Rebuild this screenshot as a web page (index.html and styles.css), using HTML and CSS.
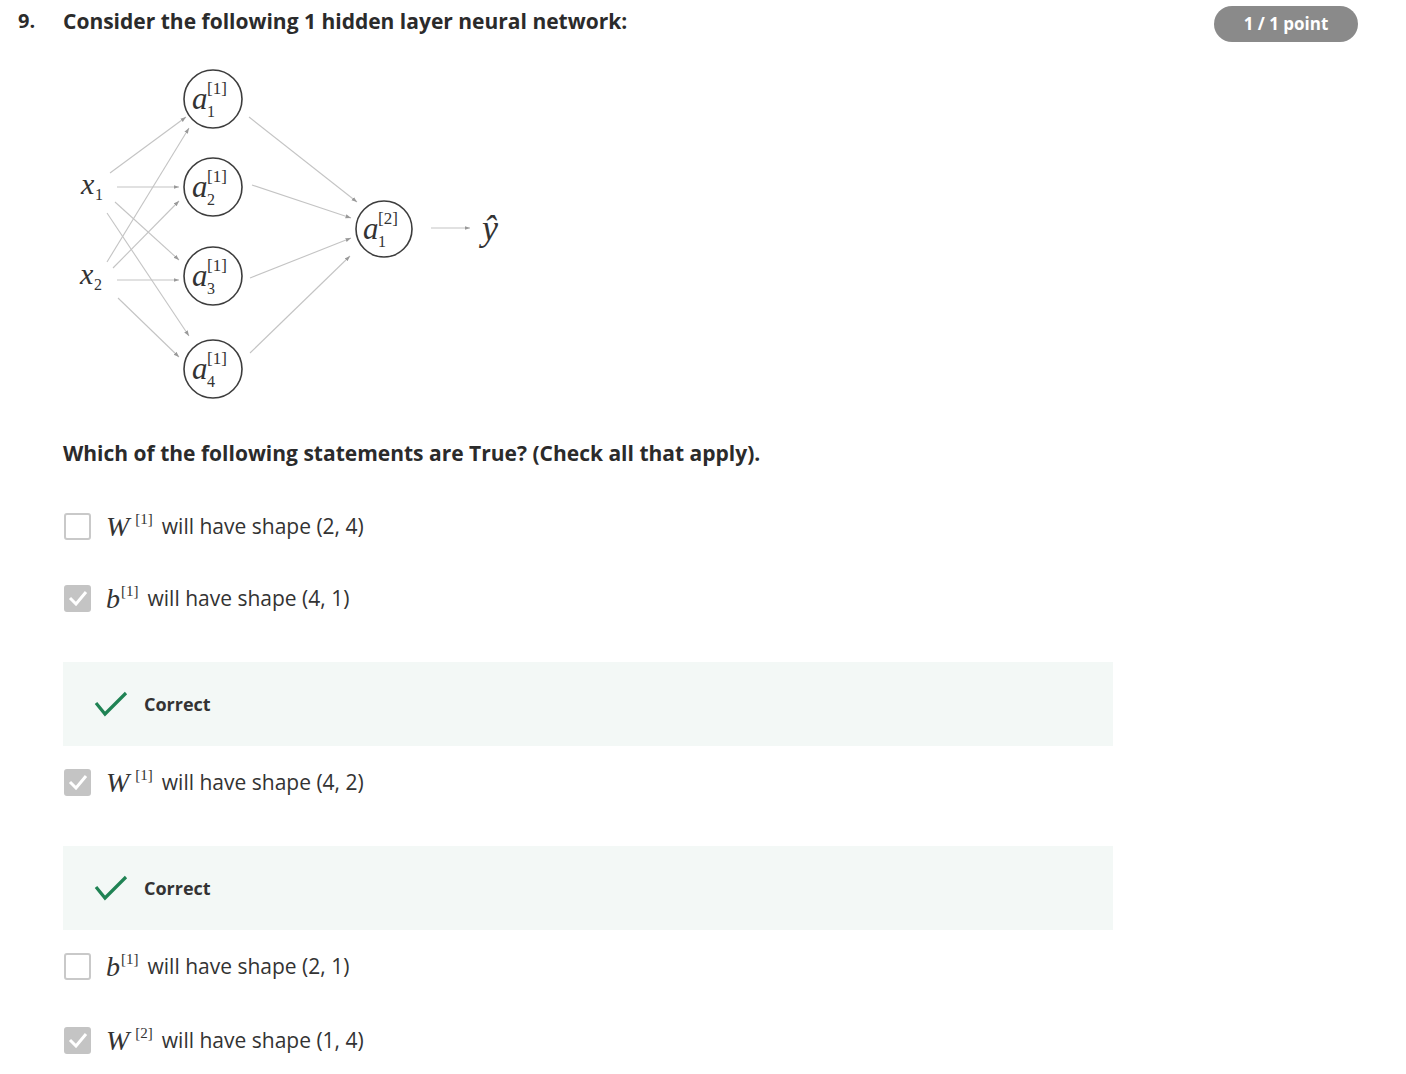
FILE: index.html
```html
<!DOCTYPE html>
<html>
<head>
<meta charset="utf-8">
<link rel="stylesheet" href="styles.css">
</head>
<body>
<div class="question">
  <div class="q-head">
    <div class="q-num">9.</div>
    <div class="q-title">Consider the following 1 hidden layer neural network:</div>
    <div class="badge">1 / 1 point</div>
  </div>
  <div class="q-body">
    <svg class="diagram" width="460" height="350" viewBox="63 60 460 350" xmlns="http://www.w3.org/2000/svg">
      <defs>
        <marker id="ah" viewBox="0 0 6 6" refX="6" refY="3" markerWidth="5" markerHeight="5" orient="auto">
          <path d="M0,0.8 L6,3 L0,5.2 z" fill="#999"/>
        </marker>
      </defs>
      <g stroke="#c4c4c4" stroke-width="1.1" fill="none" marker-end="url(#ah)">
        <line x1="110" y1="173" x2="186" y2="117"/>
        <line x1="117" y1="187" x2="179" y2="187"/>
        <line x1="115" y1="202" x2="179" y2="260"/>
        <line x1="107" y1="213" x2="189" y2="336"/>
        <line x1="107" y1="262" x2="189" y2="128"/>
        <line x1="113" y1="268" x2="179" y2="201"/>
        <line x1="117" y1="280" x2="179" y2="280"/>
        <line x1="118" y1="298" x2="179" y2="357"/>
        <line x1="249" y1="117" x2="357" y2="202"/>
        <line x1="252" y1="185" x2="351" y2="218"/>
        <line x1="250" y1="278" x2="351" y2="238"/>
        <line x1="250" y1="353" x2="350" y2="256"/>
        <line x1="431" y1="228" x2="470" y2="228"/>
      </g>
      <g stroke="#3d3d3d" stroke-width="1.6" fill="#fff">
        <circle cx="213" cy="99" r="29"/>
        <circle cx="213" cy="187" r="29"/>
        <circle cx="213" cy="276" r="29"/>
        <circle cx="213" cy="369" r="29"/>
        <circle cx="384" cy="229" r="28"/>
      </g>
      <g class="dg" fill="#333">
        <text x="81" y="194" class="dx">x</text><text x="95" y="200" class="ds">1</text>
        <text x="80" y="284" class="dx">x</text><text x="94" y="290" class="ds">2</text>

        <text x="192" y="109" class="dv">a</text><text x="207" y="94" class="du">[1]</text><text x="207" y="117" class="ds">1</text>
        <text x="192" y="197" class="dv">a</text><text x="207" y="182" class="du">[1]</text><text x="207" y="205" class="ds">2</text>
        <text x="192" y="286" class="dv">a</text><text x="207" y="271" class="du">[1]</text><text x="207" y="294" class="ds">3</text>
        <text x="192" y="379" class="dv">a</text><text x="207" y="364" class="du">[1]</text><text x="207" y="387" class="ds">4</text>

        <text x="363" y="239" class="dv">a</text><text x="378" y="224" class="du">[2]</text><text x="378" y="247" class="ds">1</text>

        <text x="482" y="240" class="dy">ŷ</text>
      </g>
    </svg>

    <div class="prompt">Which of the following statements are True? (Check all that apply).</div>

    <div class="choices">
      <div class="choice">
        <span class="box"></span>
        <span class="math"><i>W</i><sup class="wsup">[1]</sup></span>
        <span class="label">will have shape (2, 4)</span>
      </div>
      <div class="choice">
        <span class="box checked"><svg width="20" height="16" viewBox="0 0 20 16"><polyline points="2,8 8,14 18,2" fill="none" stroke="#fff" stroke-width="3"/></svg></span>
        <span class="math"><i>b</i><sup>[1]</sup></span>
        <span class="label">will have shape (4, 1)</span>
      </div>
      <div class="feedback">
        <svg class="ok" width="34" height="26" viewBox="0 0 34 26"><polyline points="2,12 11,23 32,2" fill="none" stroke="#1f8354" stroke-width="3.2"/></svg>
        <span class="fb-text">Correct</span>
      </div>
      <div class="choice">
        <span class="box checked"><svg width="20" height="16" viewBox="0 0 20 16"><polyline points="2,8 8,14 18,2" fill="none" stroke="#fff" stroke-width="3"/></svg></span>
        <span class="math"><i>W</i><sup class="wsup">[1]</sup></span>
        <span class="label">will have shape (4, 2)</span>
      </div>
      <div class="feedback">
        <svg class="ok" width="34" height="26" viewBox="0 0 34 26"><polyline points="2,12 11,23 32,2" fill="none" stroke="#1f8354" stroke-width="3.2"/></svg>
        <span class="fb-text">Correct</span>
      </div>
      <div class="choice">
        <span class="box"></span>
        <span class="math"><i>b</i><sup>[1]</sup></span>
        <span class="label">will have shape (2, 1)</span>
      </div>
      <div class="choice">
        <span class="box checked"><svg width="20" height="16" viewBox="0 0 20 16"><polyline points="2,8 8,14 18,2" fill="none" stroke="#fff" stroke-width="3"/></svg></span>
        <span class="math"><i>W</i><sup class="wsup">[2]</sup></span>
        <span class="label">will have shape (1, 4)</span>
      </div>
    </div>
  </div>
</div>
</body>
</html>
```
FILE: styles.css
```css
html, body {
  margin: 0;
  padding: 0;
  background: #fff;
}
body {
  font-family: "Open Sans", "Noto Sans", sans-serif;
  color: #333;
}
.question {
  padding: 6px 48px 0 18px;
}
.q-head {
  display: flex;
  align-items: flex-start;
  height: 36px;
}
.q-num {
  width: 45px;
  font-size: 20px;
  font-weight: 700;
  line-height: 30px;
  color: #2b2b2b;
}
.q-title {
  flex: 1;
  font-size: 21px;
  font-weight: 700;
  line-height: 30px;
  color: #2b2b2b;
}
.badge {
  width: 144px;
  height: 36px;
  border-radius: 18px;
  background: #8a8a8a;
  color: #fff;
  font-size: 17px;
  font-weight: 700;
  line-height: 36px;
  text-align: center;
}
.q-body {
  padding-left: 45px;
}
.diagram {
  display: block;
  margin-top: 18px;
}
.dg text { font-family: "Liberation Serif", "Times New Roman", serif; }
.dv { font-size: 31px; font-style: italic; }
.dx { font-size: 30px; font-style: italic; }
.du { font-size: 17px; }
.ds { font-size: 16px; }
.dy { font-size: 36px; font-style: italic; }

.prompt {
  margin-top: 28px;
  font-size: 21px;
  font-weight: 700;
  line-height: 30px;
  color: #2b2b2b;
}
.choices {
  display: flex;
  flex-direction: column;
  margin-top: 38px;
  width: 1050px;
}
.choice {
  display: flex;
  align-items: center;
  height: 40px;
  padding-left: 1px;
}
.choice + .choice { margin-top: 32px; }
.choice + .feedback { margin-top: 44px; }
.feedback + .choice { margin-top: 16px; }
.choice:last-child { margin-top: 34px; }
.box {
  box-sizing: border-box;
  width: 27px;
  height: 27px;
  border: 2px solid #c9c9c9;
  border-radius: 3px;
  background: #fff;
  display: flex;
  align-items: center;
  justify-content: center;
  margin-right: 15px;
  flex: none;
}
.box.checked {
  background: #c4c4c4;
  border-color: #c4c4c4;
}
.math {
  font-family: "Liberation Serif", "Times New Roman", serif;
  font-size: 28px;
  color: #333;
  margin-right: 9px;
  position: relative;
  top: 1px;
}
.math i { font-style: italic; }
.math sup {
  font-size: 15px;
  vertical-align: 0;
  position: relative;
  top: -12px;
  margin-left: 1px;
  font-style: normal;
}
.math sup.wsup { margin-left: 6px; }
.label {
  font-size: 21px;
  color: #333;
}
.feedback {
  display: flex;
  align-items: center;
  height: 84px;
  background: #f3f8f6;
  padding-left: 31px;
}
.ok { margin-right: 16px; }
.fb-text {
  font-size: 18px;
  font-weight: 700;
  color: #333;
}
```
